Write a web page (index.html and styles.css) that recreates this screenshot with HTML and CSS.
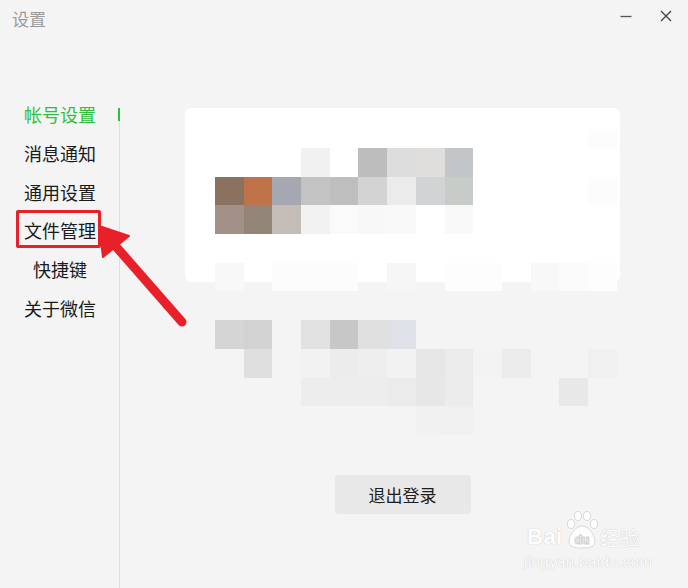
FILE: index.html
```html
<!DOCTYPE html>
<html lang="zh-CN">
<head>
    <meta charset="UTF-8">
    <title>设置</title>
    <link rel="stylesheet" href="styles.css">
</head>
<body>
    <div class="window">
        <div class="titlebar">
            <span class="title">设置</span>
            <div class="controls">
                <button class="ctl" aria-label="最小化">
                    <svg width="12" height="12" viewBox="0 0 12 12"><path d="M0.5 6.5H11.5" stroke="#555" stroke-width="1.3"/></svg>
                </button>
                <button class="ctl" aria-label="关闭">
                    <svg width="12" height="12" viewBox="0 0 12 12"><path d="M1 1L11 11M11 1L1 11" stroke="#444" stroke-width="1.4"/></svg>
                </button>
            </div>
        </div>

        <div class="content">
            <div class="sidebar">
                <ul class="nav">
                    <li class="nav-item active">帐号设置</li>
                    <li class="nav-item">消息通知</li>
                    <li class="nav-item">通用设置</li>
                    <li class="nav-item"><span class="marked">文件管理</span></li>
                    <li class="nav-item">快捷键</li>
                    <li class="nav-item">关于微信</li>
                </ul>
                <div class="rail">
                    <div class="indicator"></div>
                    <div class="rail-line"></div>
                </div>
            </div>

            <div class="main">
                <div class="panel">
                    <div class="account-card"></div>
                    <button class="logout">退出登录</button>
                </div>
                <!-- blurred profile picture -->
                <div class="mosaic" id="mosaic"></div>
            </div>
        </div>

        <svg class="arrow" width="688" height="588" viewBox="0 0 688 588">
            <path d="M182 322L112 242" stroke="#e8202a" stroke-width="9" stroke-linecap="round"/>
            <polygon points="99,226 103,257 129,236" fill="#e8202a" stroke="#e8202a" stroke-width="2" stroke-linejoin="round"/>
        </svg>

        <div class="watermark">
            <div class="wm-top">
                <span class="wm-bai">Bai</span>
                <svg class="wm-paw" width="36" height="40" viewBox="0 0 36 40">
                    <g fill="#fdfdfd" stroke="#d9d9d9" stroke-width="1">
                        <ellipse cx="7" cy="14" rx="3.5" ry="4.5"/>
                        <ellipse cx="14" cy="6" rx="3.5" ry="4.5"/>
                        <ellipse cx="23" cy="6" rx="3.5" ry="4.5"/>
                        <ellipse cx="30" cy="14" rx="3.5" ry="4.5"/>
                        <path d="M18 16C11 16 5 26 5 31C5 37 10 38 18 38C26 38 31 37 31 31C31 26 25 16 18 16Z"/>
                    </g>
                    <text x="18" y="34" text-anchor="middle" class="wm-du">du</text>
                </svg>
                <span class="wm-cn">经验</span>
            </div>
            <div class="wm-url">jingyan.baidu.com</div>
        </div>
    </div>

    <script>
        // [row, col, span, colour]
        const cells = [
            [0, 13, 1, '#fcfcfc'],
            [1, 3, 1, '#f1f1f1'], [1, 5, 1, '#bdbdbd'], [1, 6, 1, '#dddddd'], [1, 7, 1, '#dfdedc'], [1, 8, 1, '#c3c6c9'],
            [2, 0, 1, '#8b7260'], [2, 1, 1, '#c07249'], [2, 2, 1, '#a5a8b1'], [2, 3, 1, '#c3c3c3'], [2, 4, 1, '#bebebe'],
            [2, 5, 1, '#d3d3d3'], [2, 6, 1, '#ebebeb'], [2, 7, 1, '#d2d3d5'], [2, 8, 1, '#c7ccc8'], [2, 13, 1, '#fcfcfc'],
            [3, 0, 1, '#a39188'], [3, 1, 1, '#928578'], [3, 2, 1, '#c4bcb6'], [3, 3, 1, '#f2f2f2'], [3, 4, 1, '#fafafa'],
            [3, 5, 1, '#f8f8f8'], [3, 6, 1, '#f9f9f9'], [3, 8, 1, '#f9f9f9'],
            [5, 0, 1, '#f8f8f8'], [5, 2, 3, '#fcfcfc'], [5, 6, 1, '#f6f6f6'], [5, 8, 2, '#fdfdfd'],
            [5, 11, 1, '#f8f8f8'], [5, 12, 1, '#fbfbfb'], [5, 13, 1, '#fdfdfd'],
            [7, 0, 1, '#d5d5d5'], [7, 1, 1, '#d2d2d2'], [7, 3, 1, '#e1e1e1'], [7, 4, 1, '#c7c7c7'], [7, 5, 1, '#e0e0e0'], [7, 6, 1, '#dfe1e8'],
            [8, 1, 1, '#dfdfdf'], [8, 3, 1, '#f2f2f2'], [8, 4, 1, '#ececec'], [8, 5, 1, '#eeeeee'], [8, 6, 1, '#f2f2f2'],
            [8, 7, 1, '#e6e6e6'], [8, 8, 1, '#ebebeb'], [8, 9, 1, '#f3f3f3'], [8, 10, 1, '#ebebeb'], [8, 13, 1, '#f0f0f0'],
            [9, 3, 3, '#ededed'], [9, 6, 1, '#ebebeb'], [9, 7, 1, '#e7e7e7'], [9, 8, 1, '#ececec'], [9, 12, 1, '#e8e8e8'],
            [10, 7, 1, '#f1f1f1'], [10, 8, 1, '#f0f0f0']
        ];
        const mosaic = document.getElementById('mosaic');
        cells.forEach(([r, c, span, color]) => {
            const cell = document.createElement('div');
            cell.style.gridArea = `${r + 1} / ${c + 1} / span 1 / span ${span}`;
            cell.style.background = color;
            mosaic.appendChild(cell);
        });
    </script>
</body>
</html>
```

FILE: styles.css
```css
:root {
    --bg: #f4f4f4;
    --green: #2fbf3c;
    --red: #e8202a;
    --text: #1a1a1a;
    --divider: #dedede;
}

* {
    box-sizing: border-box;
    margin: 0;
    padding: 0;
}

body {
    font-family: "Noto Sans CJK SC", "Noto Sans", sans-serif;
    background: var(--bg);
    color: var(--text);
    width: 688px;
    height: 588px;
    overflow: hidden;
}

.window {
    position: relative;
    display: flex;
    flex-direction: column;
    height: 588px;
}

.titlebar {
    height: 38px;
    display: flex;
    align-items: center;
    justify-content: space-between;
    padding-left: 12px;
}

.title {
    font-size: 17px;
    color: #9b9b9b;
    line-height: 1;
    margin-top: -2px;
}

.controls {
    display: flex;
    align-self: flex-start;
    padding-top: 9px;
    margin-right: 10px;
    gap: 16px;
}

.ctl {
    width: 24px;
    height: 14px;
    display: flex;
    align-items: center;
    justify-content: center;
    border: none;
    background: none;
}

.content {
    flex: 1;
    display: flex;
}

.sidebar {
    width: 121px;
    display: flex;
}

.nav {
    list-style: none;
    width: 118px;
    padding-top: 56.6px;
}

.nav-item {
    height: 38.8px;
    display: flex;
    align-items: center;
    justify-content: center;
    padding-left: 2px;
    font-size: 18px;
    line-height: 1;
}

.nav-item.active {
    color: var(--green);
}

.marked {
    position: relative;
}

.marked::after {
    content: "";
    position: absolute;
    left: -8px;
    right: -5px;
    top: -11px;
    bottom: -9px;
    border: 3px solid var(--red);
    border-radius: 2px;
}

.rail {
    width: 2px;
    display: flex;
    flex-direction: column;
    padding-top: 70px;
}

.indicator {
    height: 13px;
    background: var(--green);
}

.rail-line {
    flex: 1;
    width: 1px;
    margin-left: 1px;
    background: var(--divider);
}

.main {
    position: relative;
    flex: 1;
    padding-left: 64px;
}

.panel {
    width: 435px;
    display: flex;
    flex-direction: column;
    align-items: center;
}

.account-card {
    width: 435px;
    height: 174px;
    margin-top: 70px;
    background: #fff;
    border-radius: 6px;
}

.logout {
    margin-top: 193px;
    width: 136px;
    height: 39px;
    border: none;
    border-radius: 4px;
    background: #e8e8e8;
    font-family: inherit;
    font-size: 17px;
    color: #1e1e1e;
}

.mosaic {
    position: absolute;
    left: 94px;
    top: 91px;
    display: grid;
    grid-template-columns: repeat(14, 28.7px);
    grid-template-rows: 19px repeat(10, 28.7px);
}

.arrow {
    position: absolute;
    left: 0;
    top: 0;
    pointer-events: none;
}

.watermark {
    position: absolute;
    left: 524px;
    top: 510px;
    display: flex;
    flex-direction: column;
    align-items: flex-start;
    color: #fdfdfd;
    text-shadow: 0 0 1px #cdcdcd, 0 0 1px #cdcdcd;
}

.wm-top {
    display: flex;
    align-items: flex-end;
    height: 40px;
}

.wm-bai {
    font-family: "Liberation Sans", sans-serif;
    font-weight: bold;
    font-size: 22px;
    line-height: 1;
    margin-bottom: 2px;
    margin-left: 3px;
    letter-spacing: 0.5px;
}

.wm-paw {
    margin-left: 1px;
}

.wm-du {
    font-family: "Liberation Sans", sans-serif;
    font-size: 12px;
    font-weight: bold;
    fill: #fdfdfd;
    stroke: #d0d0d0;
    stroke-width: 0.4;
}

.wm-cn {
    font-size: 20px;
    line-height: 1;
    margin-bottom: 2px;
}

.wm-url {
    font-family: "Liberation Sans", sans-serif;
    font-size: 15.5px;
    line-height: 1;
    margin-top: 4px;
    letter-spacing: 0.2px;
}
```
